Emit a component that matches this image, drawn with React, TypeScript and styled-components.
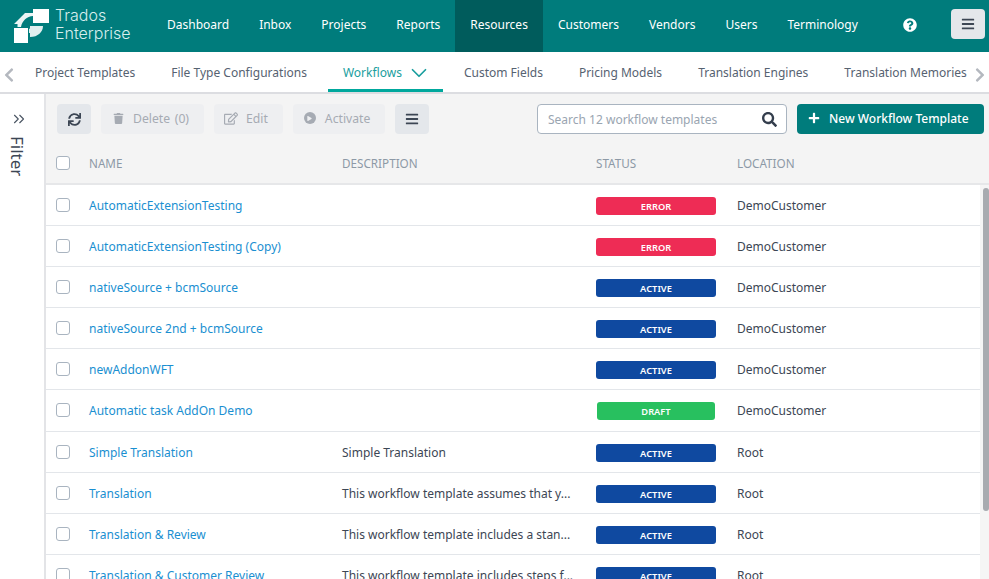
import styled, { createGlobalStyle } from 'styled-components';
import {
  FaChevronLeft,
  FaChevronRight,
  FaPlay,
  FaPlus,
  FaQuestionCircle,
  FaSearch,
  FaSync,
  FaTrash,
  FaBars,
  FaRegEdit,
} from 'react-icons/fa';
import { LuChevronDown, LuChevronsRight } from 'react-icons/lu';

const navItems = ['Dashboard', 'Inbox', 'Projects', 'Reports', 'Resources', 'Customers', 'Vendors', 'Users', 'Terminology'];
const tabs = ['Project Templates', 'File Type Configurations', 'Workflows', 'Custom Fields', 'Pricing Models', 'Translation Engines', 'Translation Memories'];

type Status = 'ERROR' | 'ACTIVE' | 'DRAFT';

const rows: { name: string; description: string; status: Status; location: string }[] = [
  { name: 'AutomaticExtensionTesting', description: '', status: 'ERROR', location: 'DemoCustomer' },
  { name: 'AutomaticExtensionTesting (Copy)', description: '', status: 'ERROR', location: 'DemoCustomer' },
  { name: 'nativeSource + bcmSource', description: '', status: 'ACTIVE', location: 'DemoCustomer' },
  { name: 'nativeSource 2nd + bcmSource', description: '', status: 'ACTIVE', location: 'DemoCustomer' },
  { name: 'newAddonWFT', description: '', status: 'ACTIVE', location: 'DemoCustomer' },
  { name: 'Automatic task AddOn Demo', description: '', status: 'DRAFT', location: 'DemoCustomer' },
  { name: 'Simple Translation', description: 'Simple Translation', status: 'ACTIVE', location: 'Root' },
  { name: 'Translation', description: 'This workflow template assumes that y...', status: 'ACTIVE', location: 'Root' },
  { name: 'Translation & Review', description: 'This workflow template includes a stan...', status: 'ACTIVE', location: 'Root' },
  { name: 'Translation & Customer Review', description: 'This workflow template includes steps f...', status: 'ACTIVE', location: 'Root' },
];

const statusColors: Record<Status, string> = {
  ERROR: '#ee2c55',
  ACTIVE: '#0f49a0',
  DRAFT: '#28c05f',
};

function Logo() {
  return (
    <svg width="35" height="34" viewBox="0 0 35 34" aria-hidden="true">
      <rect x="19" y="0" width="16" height="14" fill="#fff" />
      <rect x="0" y="19" width="14" height="15" fill="#fff" />
      <path fill="#fff" opacity="0.92" d="M0 15 11 4h8v3c-6 0-11 5-12 11H3.5v-3z" />
      <path fill="#fff" opacity="0.88" d="M16 17h13c0 6-5 11-13 11v-4h-1v-4c1 0 1-1 1-3z" />
    </svg>
  );
}

export default function App() {
  return (
    <>
      <GlobalStyle />
      <Page>
        <Header>
          <Brand>
            <Logo />
            <BrandName>
              Trados
              <br />
              Enterprise
            </BrandName>
          </Brand>
          <Nav>
            {navItems.map((item) => (
              <NavItem key={item} $active={item === 'Resources'}>
                {item}
              </NavItem>
            ))}
          </Nav>
          <HelpIcon>
            <FaQuestionCircle size={14} />
          </HelpIcon>
          <MenuButton>
            <FaBars size={14} />
          </MenuButton>
        </Header>

        <TabBar>
          <TabArrow>
            <FaChevronLeft size={16} />
          </TabArrow>
          <TabList>
            {tabs.map((tab) => (
              <Tab key={tab} $active={tab === 'Workflows'}>
                {tab}
                {tab === 'Workflows' && <TabChevron size={26} strokeWidth={1.6} />}
              </Tab>
            ))}
          </TabList>
          <TabArrow>
            <FaChevronRight size={16} />
          </TabArrow>
        </TabBar>

        <Body>
          <FilterRail>
            <FilterChevrons size={18} strokeWidth={1.5} />
            <FilterLabel>Filter</FilterLabel>
          </FilterRail>
          <Main>
            <Toolbar>
              <IconButton>
                <FaSync size={13} />
              </IconButton>
              <ActionButton>
                <ActionIcon>
                  <FaTrash size={11} />
                </ActionIcon>
                Delete (0)
              </ActionButton>
              <ActionButton>
                <ActionIcon>
                  <FaRegEdit size={15} />
                </ActionIcon>
                Edit
              </ActionButton>
              <ActionButton>
                <ActionIcon>
                  <PlayCircle>
                    <FaPlay size={5} />
                  </PlayCircle>
                </ActionIcon>
                Activate
              </ActionButton>
              <IconButton>
                <FaBars size={14} />
              </IconButton>
              <Spacer />
              <SearchBox>
                <SearchText>Search 12 workflow templates</SearchText>
                <FaSearch size={15} />
              </SearchBox>
              <PrimaryButton>
                <FaPlus size={12} />
                New Workflow Template
              </PrimaryButton>
            </Toolbar>

            <HeaderRow>
              <CheckCell>
                <CheckBox />
              </CheckCell>
              <HeaderCell>NAME</HeaderCell>
              <HeaderCell>DESCRIPTION</HeaderCell>
              <HeaderCell>STATUS</HeaderCell>
              <HeaderCell>LOCATION</HeaderCell>
            </HeaderRow>

            <TableBody>
              <RowList>
                {rows.map((row) => (
                  <Row key={row.name} $tall={row.status === 'DRAFT'}>
                    <CheckCell>
                      <CheckBox />
                    </CheckCell>
                    <NameLink>{row.name}</NameLink>
                    <Description>{row.description}</Description>
                    <StatusCell>
                      <StatusBadge $status={row.status}>{row.status}</StatusBadge>
                    </StatusCell>
                    <Location>{row.location}</Location>
                  </Row>
                ))}
              </RowList>
              <ScrollTrack>
                <ScrollThumb />
              </ScrollTrack>
            </TableBody>
          </Main>
        </Body>
      </Page>
    </>
  );
}

const GlobalStyle = createGlobalStyle`
  html, body {
    margin: 0;
    height: 100%;
    overflow: hidden;
  }
  body {
    font-family: 'Noto Sans', 'Open Sans', sans-serif;
    font-size: 12px;
    color: #3c4654;
  }
`;

const Page = styled.div`
  width: 989px;
  height: 579px;
  display: flex;
  flex-direction: column;
  overflow: hidden;
`;

const Header = styled.header`
  height: 52px;
  flex: none;
  display: flex;
  align-items: stretch;
  background: #007c7c;
  color: #fff;
`;

const Brand = styled.div`
  width: 152px;
  flex: none;
  display: flex;
  align-items: center;
  gap: 6px;
  padding-left: 14px;
  box-sizing: border-box;
`;

const BrandName = styled.div`
  font-family: 'Inter', sans-serif;
  font-size: 16px;
  line-height: 18px;
  font-weight: 300;
  color: #d8eeee;
  margin-top: -4px;
`;

const Nav = styled.nav`
  display: flex;
  align-items: stretch;
`;

const NavItem = styled.a<{ $active?: boolean }>`
  display: flex;
  align-items: center;
  padding: 0 15px 4px;
  font-size: 12px;
  font-weight: 400;
  color: #fff;
  background: ${({ $active }) => ($active ? '#005c5c' : 'transparent')};
`;

const HelpIcon = styled.span`
  width: 14px;
  height: 14px;
  margin: 18px 0 0 30px;
  color: #fff;
  display: flex;
`;

const MenuButton = styled.button`
  width: 34px;
  height: 30px;
  margin: 9px 0 0 34px;
  padding: 0;
  border: 0;
  border-radius: 4px;
  background: #e4e7eb;
  color: #3c4654;
  display: flex;
  align-items: center;
  justify-content: center;
`;

const TabBar = styled.div`
  height: 42px;
  flex: none;
  box-sizing: border-box;
  display: flex;
  align-items: stretch;
  background: #fff;
  border-bottom: 2px solid #dcdde1;
`;

const TabArrow = styled.span`
  width: 18px;
  flex: none;
  box-sizing: border-box;
  padding-top: 6px;
  display: flex;
  align-items: center;
  justify-content: center;
  color: #b4b8bf;
`;

const TabList = styled.div`
  flex: 1;
  min-width: 0;
  display: flex;
  gap: 6px;
  padding-left: 2px;
  overflow: hidden;
`;

const Tab = styled.a<{ $active?: boolean }>`
  flex: none;
  display: flex;
  align-items: center;
  gap: 4px;
  height: 40px;
  padding: 4px 15px 0;
  box-sizing: border-box;
  font-size: 12px;
  white-space: nowrap;
  color: ${({ $active }) => ($active ? '#1a9e9e' : '#566271')};
  border-bottom: 3px solid ${({ $active }) => ($active ? '#00a89d' : 'transparent')};
`;

const TabChevron = styled(LuChevronDown)`
  margin-right: -4px;
`;

const Body = styled.div`
  flex: 1;
  min-height: 0;
  display: flex;
`;

const FilterRail = styled.aside`
  width: 46px;
  flex: none;
  box-sizing: border-box;
  border-right: 2px solid #e3e4e7;
  background: #fff;
  display: flex;
  flex-direction: column;
  align-items: center;
  padding: 16px 10px 0 0;
  gap: 8px;
  color: #4a5563;
`;

const FilterChevrons = styled(LuChevronsRight)`
  margin-left: 3px;
`;

const FilterLabel = styled.span`
  writing-mode: vertical-rl;
  font-size: 17px;
  line-height: 17px;
  color: #3c4654;
`;

const Main = styled.main`
  flex: 1;
  min-width: 0;
  display: flex;
  flex-direction: column;
  background: #f4f4f4;
`;

const Toolbar = styled.div`
  height: 51px;
  flex: none;
  box-sizing: border-box;
  display: flex;
  align-items: center;
  gap: 10px;
  padding: 0 5px 1px 11px;
`;

const IconButton = styled.button`
  width: 34px;
  height: 30px;
  padding: 0;
  border: 0;
  border-radius: 4px;
  background: #e4e7eb;
  color: #3c4654;
  display: flex;
  align-items: center;
  justify-content: center;
`;

const ActionButton = styled.button`
  height: 30px;
  padding: 0 15px 2px 10px;
  border: 0;
  border-radius: 4px;
  background: #eeeff1;
  color: #a6abb3;
  display: flex;
  align-items: center;
  gap: 8px;
  font: inherit;
  font-size: 12.2px;
  word-spacing: 1.5px;
`;

const ActionIcon = styled.span`
  width: 14px;
  display: flex;
  align-items: center;
  justify-content: center;
`;

const PlayCircle = styled.span`
  width: 12px;
  height: 12px;
  border-radius: 50%;
  background: #a6abb3;
  color: #eeeff1;
  display: flex;
  align-items: center;
  justify-content: center;
`;

const Spacer = styled.div`
  flex: 1;
`;

const SearchBox = styled.div`
  width: 250px;
  height: 30px;
  box-sizing: border-box;
  display: flex;
  align-items: center;
  justify-content: space-between;
  padding: 0 9px 0 10px;
  background: #fff;
  border: 1px solid #a9b4c0;
  border-radius: 4px;
  color: #343e4d;
`;

const SearchText = styled.span`
  font-size: 12px;
  color: #9aa5b1;
`;

const PrimaryButton = styled.button`
  width: 187px;
  height: 30px;
  padding: 0 0 2px 11px;
  border: 0;
  border-radius: 4px;
  background: #007c7c;
  color: #fff;
  display: flex;
  align-items: center;
  gap: 9px;
  font: inherit;
  font-size: 12px;
  font-weight: 500;
`;

const columns = '43px 253px 254px 141px 1fr';

const HeaderRow = styled.div`
  height: 40px;
  flex: none;
  box-sizing: border-box;
  display: grid;
  grid-template-columns: ${columns};
  align-items: center;
  padding-bottom: 2px;
  border-bottom: 2px solid #e6e7e9;
`;

const CheckCell = styled.div`
  display: flex;
  align-items: center;
  padding-left: 10px;
`;

const CheckBox = styled.span`
  width: 14px;
  height: 14px;
  box-sizing: border-box;
  border: 1.5px solid #a9b4c0;
  border-radius: 3px;
  background: #fff;
`;

const HeaderCell = styled.div`
  font-size: 11.7px;
  color: #8d99a6;
`;

const TableBody = styled.div`
  flex: 1;
  min-height: 0;
  position: relative;
  overflow: hidden;
  background: #fff;
`;

const RowList = styled.div`
  display: flex;
  flex-direction: column;
`;

const Row = styled.div<{ $tall?: boolean }>`
  height: ${({ $tall }) => ($tall ? '42px' : '41px')};
  flex: none;
  box-sizing: border-box;
  display: grid;
  grid-template-columns: ${columns};
  align-items: center;
  padding-bottom: ${({ $tall }) => ($tall ? '1px' : '0')};
  border-bottom: 1px solid #e3e6ea;
  font-size: 12px;
`;

const NameLink = styled.a`
  color: #1a8fd1;
`;

const Description = styled.div`
  color: #3c4654;
  white-space: nowrap;
`;

const StatusCell = styled.div`
  display: flex;
  padding-top: 2px;
`;

const StatusBadge = styled.span<{ $status: Status }>`
  width: ${({ $status }) => ($status === 'DRAFT' ? '118px' : '120px')};
  margin-left: ${({ $status }) => ($status === 'DRAFT' ? '1px' : '0')};
  height: 18px;
  border-radius: 3px;
  display: flex;
  align-items: center;
  justify-content: center;
  font-size: 9.3px;
  font-weight: 600;
  color: #fff;
  background: ${({ $status }) => statusColors[$status]};
`;

const Location = styled.div`
  color: #3c4654;
`;

const ScrollTrack = styled.div`
  position: absolute;
  top: 0;
  right: 0;
  bottom: 0;
  width: 9px;
  background: #f5f5f5;
`;

const ScrollThumb = styled.div`
  margin: 3px 0 0 3px;
  height: 323px;
  background: #a8abb0;
  border-radius: 3px;
`;
